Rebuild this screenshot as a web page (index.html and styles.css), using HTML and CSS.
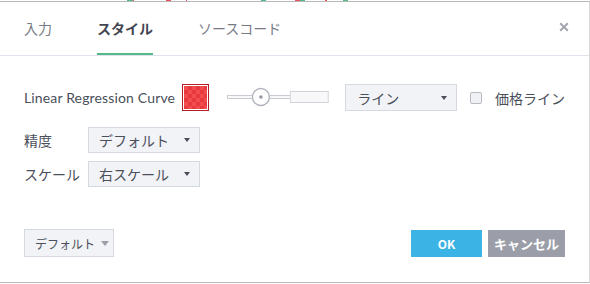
FILE: index.html
```html
<!DOCTYPE html>
<html lang="ja">
<head>
<meta charset="utf-8">
<link rel="stylesheet" href="styles.css">
</head>
<body>
<div class="chart-top"></div>
<div class="dialog">
  <div class="header">
    <div class="tabs">
      <div class="tab">入力</div>
      <div class="tab active">スタイル</div>
      <div class="tab">ソースコード</div>
    </div>
    <svg class="close" width="10" height="10" viewBox="0 0 10 10"><path d="M1.2 1.2L8.8 8.8M8.8 1.2L1.2 8.8" stroke="#a3a6af" stroke-width="2"/></svg>
  </div>
  <div class="content">
    <div class="row row-main">
      <span class="label latin">Linear Regression Curve</span>
      <span class="swatch"><span class="swatch-inner"></span></span>
      <svg class="slider" width="104" height="27" viewBox="0 0 104 27">
        <rect x="0.5" y="11.5" width="30" height="3" fill="#f8f8f9" stroke="#c9ccd3"/>
        <rect x="42" y="11.5" width="22" height="3" fill="#f8f8f9" stroke="#c9ccd3"/>
        <rect x="63.5" y="7.5" width="38" height="11" fill="#f8f8f9" stroke="#d1d4da"/>
        <circle cx="34" cy="13" r="8.5" fill="#fff" stroke="#b2b5be" stroke-width="1.4"/>
        <circle cx="34" cy="13" r="1.8" fill="#9598a1"/>
      </svg>
      <div class="select sel-line"><span>ライン</span><span class="caret"></span></div>
      <span class="checkbox"></span>
      <span class="label">価格ライン</span>
    </div>
    <div class="row row-a">
      <span class="label fixed">精度</span>
      <div class="select sel-small"><span>デフォルト</span><span class="caret"></span></div>
    </div>
    <div class="row row-b">
      <span class="label fixed">スケール</span>
      <div class="select sel-small"><span>右スケール</span><span class="caret"></span></div>
    </div>
  </div>
  <div class="footer">
    <div class="btn-default"><span>デフォルト</span><span class="caret light"></span></div>
    <div class="actions">
      <div class="btn ok">OK</div>
      <div class="btn cancel">キャンセル</div>
    </div>
  </div>
</div>
<div class="chart-bottom"></div>
</body>
</html>
```
FILE: styles.css
```css
html, body {
  margin: 0;
  padding: 0;
  background: #fff;
}
body {
  width: 590px;
  height: 284px;
  overflow: hidden;
  font-family: "Noto Sans CJK JP", "Noto Sans", sans-serif;
  color: #4a4f5a;
}
.chart-top {
  height: 1px;
  background:
    linear-gradient(90deg,
      transparent 0, transparent 127px,
      #53b987 127px, #53b987 133px, #eb4d5c 133px, #eb4d5c 134px,
      transparent 134px, transparent 166px,
      #eb4d5c 166px, #eb4d5c 171px, transparent 171px, transparent 186px,
      #eb4d5c 186px, #eb4d5c 187px, transparent 187px, transparent 261px,
      #53b987 261px, #53b987 266px, transparent 266px, transparent 295px,
      #eb4d5c 295px, #eb4d5c 300px, #53b987 300px, #53b987 305px,
      transparent 305px, transparent 325px,
      #eb4d5c 325px, #eb4d5c 327px, transparent 327px, transparent 343px,
      #53b987 343px, #53b987 348px, transparent 348px);
}
.dialog {
  border-top: 1px solid #b8b8b8;
  border-bottom: 1px solid #b8b8b8;
  border-right: 1px solid #d8d8d8;
  box-sizing: border-box;
  height: 282px;
  display: flex;
  flex-direction: column;
}
.chart-bottom {
  height: 1px;
  background: #fff;
}
.header {
  height: 53px;
  border-bottom: 1px solid #e0e3eb;
  display: flex;
  align-items: stretch;
  justify-content: space-between;
  padding: 0 20px 0 24px;
  flex: none;
}
.tabs {
  display: flex;
  gap: 45px;
}
.tab {
  font-size: 14px;
  color: #787b86;
  display: flex;
  align-items: center;
  border-bottom: 2px solid transparent;
  box-sizing: border-box;
}
.tab.active {
  color: #434651;
  font-weight: 700;
  border-bottom-color: #53b987;
}
.close {
  align-self: center;
  margin-top: -4px;
}
.content {
  padding: 28px 24px 0 24px;
  display: flex;
  flex-direction: column;
}
.row {
  display: flex;
  align-items: center;
  height: 27px;
}
.row-a { margin-top: 16px; height: 26px; }
.row-b { margin-top: 8px; height: 26px; }
.label {
  font-size: 14px;
  color: #4a4f5a;
  white-space: nowrap;
}
.latin {
  font-family: "Lato", "Noto Sans", sans-serif;
  font-size: 14px;
  letter-spacing: 0.15px;
  width: 158px;
}
.fixed {
  width: 64px;
}
.swatch {
  width: 27px;
  height: 27px;
  box-sizing: border-box;
  border: 1px solid #b21f24;
  padding: 1px;
  background: #fff;
  display: block;
}
.swatch-inner {
  display: block;
  width: 100%;
  height: 100%;
  background-color: #f24c4f;
  background-image: conic-gradient(#e8393e 25%, transparent 0 50%, #e8393e 0 75%, transparent 0);
  background-size: 8px 8px;
}
.slider {
  margin-left: 18px;
  display: block;
}
.select {
  box-sizing: border-box;
  background: #f1f3f6;
  border: 1px solid #d6d9e0;
  display: flex;
  align-items: center;
  justify-content: space-between;
  font-size: 14px;
  color: #4a4f5a;
}
.sel-line {
  width: 112px;
  height: 27px;
  margin-left: 15px;
  padding: 0 9px 0 11px;
}
.sel-small {
  width: 112px;
  height: 26px;
  padding: 0 9px 0 10px;
}
.caret {
  width: 0;
  height: 0;
  border-left: 3.5px solid transparent;
  border-right: 3.5px solid transparent;
  border-top: 4px solid #4a4f5a;
}
.caret.light {
  border-top-color: #9b9ea8;
  border-left-width: 4.5px;
  border-right-width: 4.5px;
  border-top-width: 5px;
}
.checkbox {
  width: 12px;
  height: 12px;
  box-sizing: border-box;
  border: 1px solid #b7bac2;
  border-radius: 2px;
  background: #f0f1f4;
  margin-left: 13px;
  margin-right: 13px;
}
.footer {
  margin-top: auto;
  margin-bottom: 25px;
  padding: 0 24px;
  display: flex;
  justify-content: space-between;
  align-items: center;
}
.btn-default {
  width: 90px;
  height: 28px;
  box-sizing: border-box;
  background: #f1f3f6;
  border: 1px solid #d6d9e0;
  display: flex;
  align-items: center;
  gap: 6px;
  padding-left: 10px;
  font-size: 12px;
  color: #4a4f5a;
}
.actions {
  display: flex;
  gap: 6px;
}
.btn {
  height: 27px;
  display: flex;
  align-items: center;
  justify-content: center;
  color: #fff;
  font-weight: 700;
  font-size: 12px;
}
.ok {
  width: 71px;
  background: #3bb3e4;
}
.cancel {
  width: 77px;
  background: #9b9ea8;
  font-size: 13px;
}
```
